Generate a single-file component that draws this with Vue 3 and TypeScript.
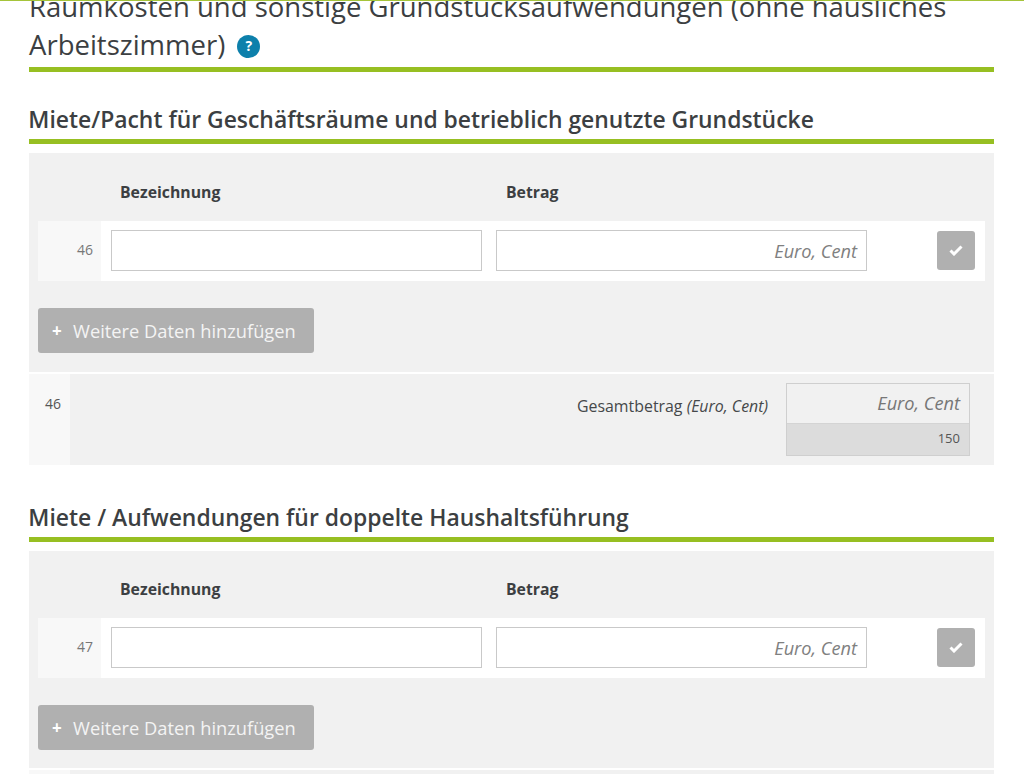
<script setup lang="ts">
interface Section {
  title: string
  line: string
  total: string
}
const sections: Section[] = [
  { title: 'Miete/Pacht für Geschäftsräume und betrieblich genutzte Grundstücke', line: '46', total: '150' },
  { title: 'Miete / Aufwendungen für doppelte Haushaltsführung', line: '47', total: '' },
]
</script>

<template>
  <div class="page">
    <div class="content">
      <h1 class="title">
        Raumkosten und sonstige Grundstücksaufwendungen (ohne häusliches Arbeitszimmer)
        <span class="help">?</span>
      </h1>
      <section v-for="s in sections" :key="s.line" class="section">
        <h2 class="subtitle">{{ s.title }}</h2>
        <div class="panel">
          <div class="heads">
            <span class="head first">Bezeichnung</span>
            <span class="head">Betrag</span>
          </div>
          <div class="row">
            <div class="num">{{ s.line }}</div>
            <div class="field name"></div>
            <div class="field amount">Euro, Cent</div>
            <div class="check">
              <svg width="14" height="12" viewBox="0 0 14 12">
                <path d="M1.5 6.5 L5 10 L12.5 2.5" fill="none" stroke="#fff" stroke-width="3" />
              </svg>
            </div>
          </div>
          <div class="add"><span class="plus">+</span>Weitere Daten hinzufügen</div>
        </div>
        <div class="total">
          <div class="total-num">{{ s.line }}</div>
          <div class="total-body">
            <span class="total-label">Gesamtbetrag <em>(Euro, Cent)</em></span>
            <div class="total-box">
              <div class="total-field">Euro, Cent</div>
              <div class="total-code">{{ s.total }}</div>
            </div>
          </div>
        </div>
      </section>
    </div>
  </div>
</template>

<style>
html, body { margin: 0; background: #fff; overflow: hidden; }
</style>

<style scoped>
.page {
  height: 774px;
  overflow: hidden;
  border-top: 1px solid #a5c43a;
  box-sizing: border-box;
  font-family: "Open Sans", "Noto Sans", sans-serif;
  color: #3c3f42;
}
.content { width: 965px; margin-left: 29px; }
.title {
  margin: -13px 0 0;
  padding-bottom: 3px;
  border-bottom: 5px solid #97bf22;
  font-size: 27.5px;
  font-weight: 400;
  line-height: 38px;
}
.help {
  display: inline-flex;
  align-items: center;
  justify-content: center;
  width: 23px;
  height: 23px;
  margin-left: 5px;
  border-radius: 50%;
  background: #0d80ab;
  color: #fff;
  font-size: 14px;
  font-weight: 700;
  line-height: 1;
  vertical-align: 4px;
}
.section { margin-top: 33px; }
.section + .section { margin-top: 38px; }
.subtitle {
  margin: 0 0 9px;
  padding-bottom: 4px;
  border-bottom: 5px solid #97bf22;
  font-size: 22.9px;
  font-weight: 600;
  line-height: 30px;
  text-indent: -0.7px;
}
.panel {
  height: 219px;
  box-sizing: border-box;
  padding: 0 9px;
  background: #f1f1f1;
}
.section + .section .panel { height: 217px; }
.heads { display: flex; height: 68px; align-items: center; padding-top: 9px; box-sizing: border-box; }
.section + .section .heads { height: 67px; }
.head { font-size: 15.8px; font-weight: 700; line-height: 20px; }
.head.first { margin-left: 82px; width: 386px; }
.row {
  display: flex;
  align-items: center;
  height: 60px;
  background: #fff;
}
.num {
  width: 63px;
  height: 60px;
  padding-right: 8px;
  box-sizing: border-box;
  background: #f8f8f8;
  color: #777;
  font-size: 14px;
  line-height: 58px;
  text-align: right;
}
.field {
  height: 41px;
  margin-bottom: 1px;
  box-sizing: border-box;
  border: 1px solid #c9c9c9;
  background: #fff;
}
.field.name { width: 371px; margin-left: 10px; }
.field.amount {
  width: 371px;
  margin-left: 14px;
  padding-right: 9px;
  color: #808080;
  font-size: 18.2px;
  font-style: italic;
  line-height: 40px;
  text-align: right;
}
.check {
  display: flex;
  align-items: center;
  justify-content: center;
  width: 38px;
  height: 39px;
  margin-left: 70px;
  margin-bottom: 2px;
  border-radius: 3px;
  background: #b0b0b0;
}
.add {
  display: flex;
  align-items: center;
  width: 276px;
  height: 45px;
  margin-top: 27px;
  padding-left: 14px;
  box-sizing: border-box;
  border-radius: 3px;
  background: #b0b0b0;
  color: #f4f4f4;
  font-size: 18.3px;
}
.plus { width: 21px; color: #fff; font-size: 17px; font-weight: 700; }
.total {
  display: flex;
  height: 91px;
  margin-top: 2px;
  background: #f1f1f1;
}
.total-num {
  width: 41px;
  padding-top: 20px;
  padding-right: 9px;
  box-sizing: border-box;
  background: #f8f8f8;
  color: #555;
  font-size: 14px;
  line-height: 20px;
  text-align: right;
}
.total-body {
  flex: 1;
  display: flex;
  justify-content: flex-end;
  padding: 9px 24px 0 0;
}
.total-label { margin: 13px 18px 0 0; font-size: 15.9px; line-height: 20px; white-space: nowrap; color: #45484a; }
.total-label em { font-size: 15.9px; }
.total-box {
  width: 184px;
  height: 73px;
  box-sizing: border-box;
  border: 1px solid #cfcfcf;
}
.total-field {
  height: 40px;
  padding-right: 9px;
  box-sizing: border-box;
  border-bottom: 1px solid #d4d4d4;
  color: #777;
  font-size: 18.2px;
  font-style: italic;
  line-height: 39px;
  text-align: right;
}
.total-code {
  height: 31px;
  padding-right: 9px;
  box-sizing: border-box;
  background: #dcdcdc;
  color: #555;
  font-size: 13px;
  line-height: 28px;
  text-align: right;
}
</style>
